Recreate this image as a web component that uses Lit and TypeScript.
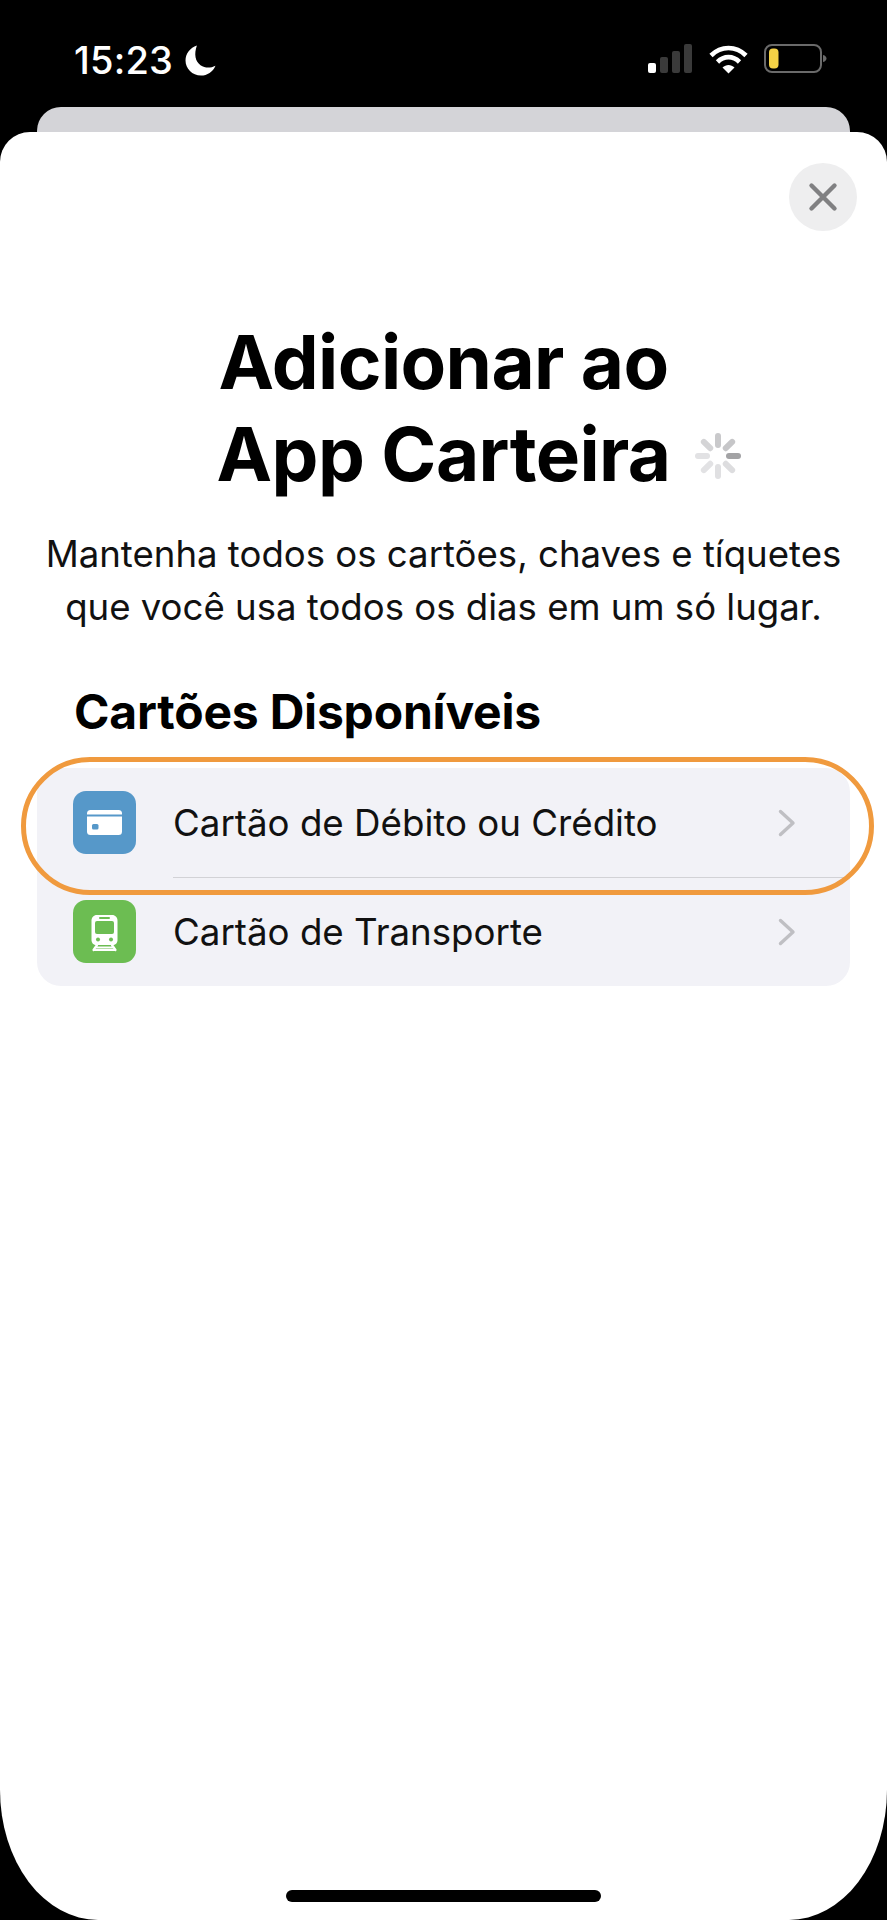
import { LitElement, html, css, svg } from 'lit';
import { customElement } from 'lit/decorators.js';

const SPOKES = [
  { angle: 0, color: '#c9c9cb' },
  { angle: 45, color: '#c6c6c8' },
  { angle: 90, color: '#a3a3a5' },
  { angle: 135, color: '#dddddf' },
  { angle: 180, color: '#e0e0e2' },
  { angle: 225, color: '#e2e2e4' },
  { angle: 270, color: '#e2e2e4' },
  { angle: 315, color: '#d4d4d6' },
];

const chevron = html`
  <svg class="chevron" viewBox="0 0 18 28" fill="none">
    <path d="M2.5 2.5 15 14 2.5 25.5" stroke="#bfbfc3" stroke-width="3.4" stroke-linecap="round" stroke-linejoin="round" />
  </svg>
`;

@customElement('app-root')
export class AppRoot extends LitElement {
  static styles = css`
    :host {
      display: flex;
      flex-direction: column;
      width: 887px;
      height: 1920px;
      background: #000;
      font-family: Inter, 'Liberation Sans', sans-serif;
      overflow: hidden;
    }

    .status {
      height: 107px;
      flex: none;
      display: flex;
      align-items: flex-start;
      padding: 44px 59px 0 74px;
      box-sizing: border-box;
      color: #fff;
    }

    .time {
      font-size: 38px;
      line-height: 32px;
      font-weight: 500;
      letter-spacing: 0.2px;
    }

    .moon {
      width: 31px;
      height: 31px;
      margin: 1px 0 0 12px;
    }

    .status-icons {
      margin-left: auto;
      width: 180px;
      height: 30px;
    }

    .peek {
      height: 25px;
      flex: none;
      margin: 0 37px;
      background: #d4d4d8;
      border-radius: 24px 24px 0 0;
    }

    .sheet {
      position: relative;
      flex: 1;
      display: flex;
      flex-direction: column;
      background: #fff;
      border-radius: 30px 30px 98px 98px / 30px 30px 130px 130px;
    }

    .close {
      width: 68px;
      height: 68px;
      flex: none;
      align-self: flex-end;
      margin: 31px 30px 0 0;
      border-radius: 50%;
      background: #eeeeef;
      display: flex;
      align-items: center;
      justify-content: center;
    }

    .close svg {
      width: 30px;
      height: 30px;
    }

    h1 {
      margin: 85px 0 0;
      font-size: 74.5px;
      line-height: 92px;
      font-weight: 700;
      letter-spacing: -0.6px;
      color: #000;
    }

    .title-line {
      display: grid;
      grid-template-columns: 1fr auto 1fr;
      align-items: center;
    }

    .title-line span {
      grid-column: 2;
    }

    .spinner {
      width: 46px;
      height: 46px;
      margin: 4px 0 0 25px;
    }

    .intro {
      margin: 28px 0 0;
      text-align: center;
      font-size: 36.6px;
      line-height: 53px;
      color: #111;
    }

    h2 {
      margin: 50px 0 0 74px;
      font-size: 48px;
      line-height: 56px;
      font-weight: 700;
      letter-spacing: -0.2px;
      color: #000;
    }

    .list {
      margin: 28px 37px 0;
      background: #f2f2f7;
      border-radius: 24px;
    }

    .row {
      position: relative;
      height: 109px;
      display: flex;
      align-items: center;
      padding: 0 54px 0 36px;
      box-sizing: border-box;
    }

    .row + .row::before {
      content: '';
      position: absolute;
      left: 136px;
      right: 0;
      top: 0;
      height: 1px;
      background: #d2d2d6;
    }

    .icon {
      width: 63px;
      height: 63px;
      border-radius: 13px;
      display: block;
    }

    .label {
      margin-left: 37px;
      flex: 1;
      font-size: 36.7px;
      color: #111;
    }

    .chevron {
      width: 18px;
      height: 28px;
    }

    .highlight {
      position: absolute;
      left: 21px;
      top: 625px;
      width: 853px;
      height: 138px;
      box-sizing: border-box;
      border: 5.5px solid #f09a3e;
      border-radius: 69px;
    }

    .home {
      position: absolute;
      left: 286px;
      bottom: 18px;
      width: 315px;
      height: 12px;
      border-radius: 6px;
      background: #000;
    }
  `;

  render() {
    return html`
      <div class="status">
        <span class="time">15:23</span>
        <svg class="moon" viewBox="0 0 30 30">
          <path fill="#fff" d="M11.5 0.5C8.5 9 10 16 15 19.5c4.500 3 9.500 3 14.500 0.500C27 26 21.500 29.500 15.500 29.500 7 29.500 0.500 23 0.500 15 0.500 8.500 5 2.500 11.500 0.500Z" />
        </svg>
        <svg class="status-icons" viewBox="0 0 180 30">
          <rect x="0" y="19" width="8" height="10" rx="2" fill="#fff" />
          <rect x="12" y="13" width="8" height="16" rx="2" fill="#3a3a3a" />
          <rect x="24" y="7" width="8" height="22" rx="2" fill="#3a3a3a" />
          <rect x="36" y="0" width="8" height="29" rx="2" fill="#3a3a3a" />
          <g fill="none" stroke="#fff" stroke-width="4.600">
            <path d="M63 11.500C73 1.500 88 1.500 98 11.500" />
            <path d="M69.500 18C76 11.500 85 11.500 91.500 18" />
          </g>
          <path fill="#fff" d="M74.500 23.500C78 20 83 20 86.500 23.500L80.500 29.500Z" />
          <rect x="117" y="1" width="56" height="27" rx="7" fill="none" stroke="#6a6a6a" stroke-width="2" />
          <rect x="121" y="4.500" width="9.500" height="20" rx="4" fill="#f5d246" />
          <path fill="#6a6a6a" d="M175 11c2.500 0.600 3.500 2 3.500 3.500S177.500 17.400 175 18Z" />
        </svg>
      </div>
      <div class="peek"></div>
      <div class="sheet">
        <div class="close">
          <svg viewBox="0 0 30 30" fill="none">
            <path d="M3.500 3.500 26.500 26.500M26.500 3.500 3.500 26.500" stroke="#808082" stroke-width="4.400" stroke-linecap="round" />
          </svg>
        </div>
        <h1>
          <div class="title-line"><span>Adicionar ao</span></div>
          <div class="title-line">
            <span>App Carteira</span>
            <svg class="spinner" viewBox="0 0 46 46" fill="none" stroke-width="6" stroke-linecap="round">
              ${SPOKES.map(
                (s) => svg`<line x1="23" y1="3" x2="23" y2="12" stroke=${s.color} transform="rotate(${s.angle} 23 23)" />`
              )}
            </svg>
          </div>
        </h1>
        <p class="intro">
          Mantenha todos os cartões, chaves e tíquetes<br />
          que você usa todos os dias em um só lugar.
        </p>
        <h2>Cartões Disponíveis</h2>
        <div class="list">
          <div class="row">
            <svg class="icon" viewBox="0 0 63 63">
              <rect width="63" height="63" fill="#5698c9" />
              <rect x="14" y="19" width="35" height="25" rx="3.500" fill="#fff" />
              <rect x="14" y="23.500" width="35" height="2" fill="#5698c9" />
              <rect x="19" y="33" width="6.500" height="5.500" rx="1.500" fill="#5698c9" />
            </svg>
            <span class="label">Cartão de Débito ou Crédito</span>
            ${chevron}
          </div>
          <div class="row">
            <svg class="icon" viewBox="0 0 63 63">
              <rect width="63" height="63" fill="#6cbd52" />
              <path fill="#fff" d="M24 15h15c3.500 0 5.500 2.500 5.500 5.500V40c0 3-2 5-5 5h-16c-3 0-5-2-5-5V20.500c0-3 2-5.500 5.500-5.500Z" />
              <rect x="22" y="21" width="19" height="13" rx="2" fill="#6cbd52" />
              <rect x="26" y="17" width="11" height="2" rx="1" fill="#6cbd52" />
              <circle cx="25" cy="39.500" r="2" fill="#6cbd52" />
              <circle cx="38" cy="39.500" r="2" fill="#6cbd52" />
              <path fill="none" stroke="#fff" stroke-width="2.200" stroke-linecap="round" d="M24 45 20.500 50M39 45 42.500 50M21 50H42M23 47.500H40" />
            </svg>
            <span class="label">Cartão de Transporte</span>
            ${chevron}
          </div>
        </div>
        <div class="highlight"></div>
        <div class="home"></div>
      </div>
    `;
  }
}
